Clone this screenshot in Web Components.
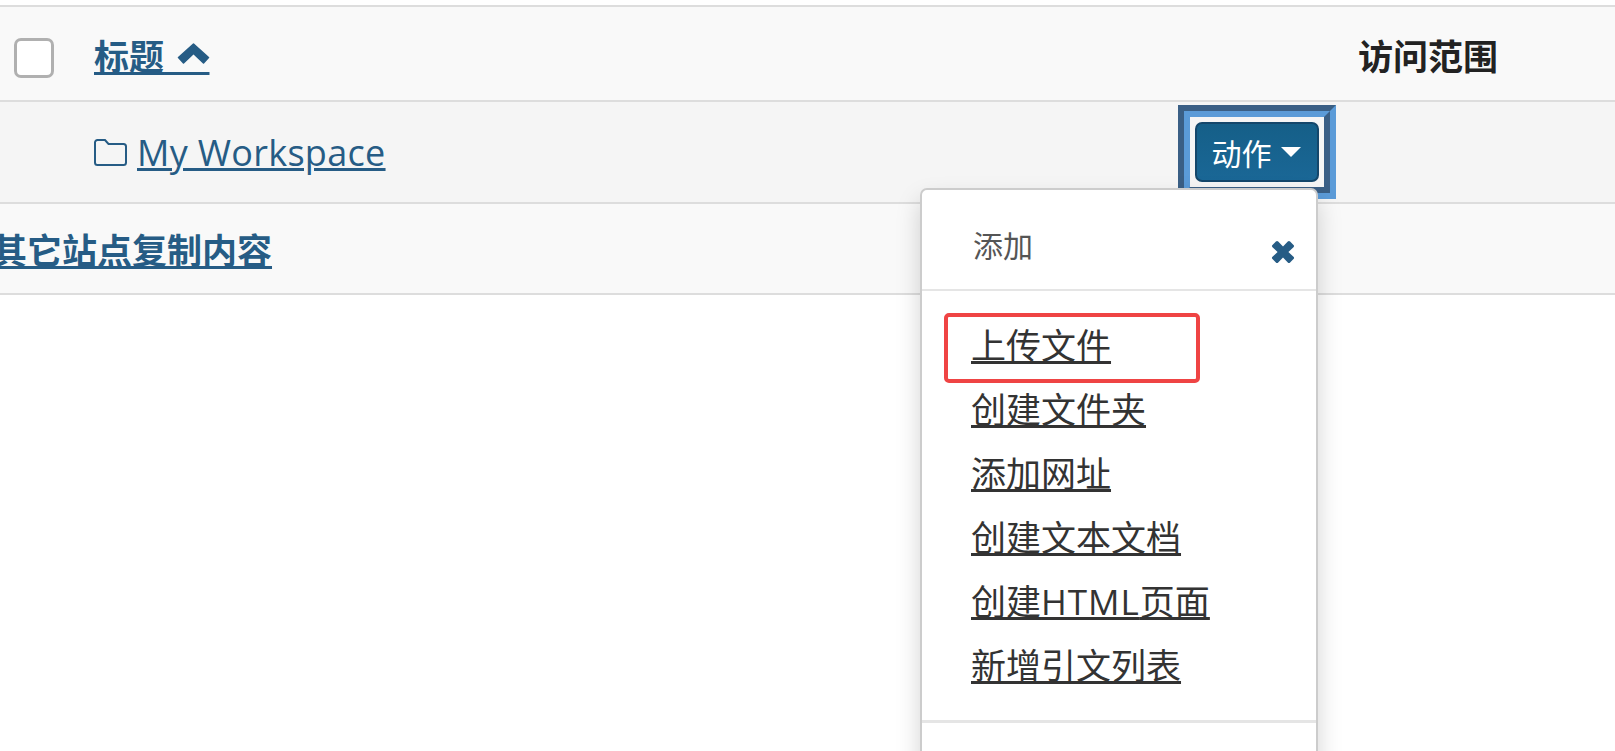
<!DOCTYPE html>
<html lang="zh">
<head>
<meta charset="utf-8">
<title>资源</title>
<style>
  html, body { margin: 0; height: 100%; overflow: hidden; background: #fff; }
  body { font-family: "Open Sans", "Noto Sans CJK SC", sans-serif; font-size: 35px; color: #333; padding-top: 5px; box-sizing: border-box; }
</style>
</head>
<body>
<site-table>
  <table-row slot="rows" kind="head" style="--h:93px">
    <check-box slot="check"></check-box>
    <sort-link slot="title">标题</sort-link>
    <span slot="access">访问范围</span>
  </table-row>
  <table-row slot="rows" kind="folder" style="--h:100px">
    <folder-link slot="title">My Workspace</folder-link>
    <action-menu slot="action" label="动作" heading="添加">
      <menu-item>上传文件<mark-box slot="mark"></mark-box></menu-item>
      <menu-item>创建文件夹</menu-item>
      <menu-item>添加网址</menu-item>
      <menu-item>创建文本文档</menu-item>
      <menu-item>创建<span style="letter-spacing:1px">HTML</span>页面</menu-item>
      <menu-item>新增引文列表</menu-item>
    </action-menu>
  </table-row>
  <table-row slot="rows" kind="foot" style="--h:89px">
    <copy-link slot="wide">其它站点复制内容</copy-link>
  </table-row>
</site-table>

<script>
// Small helper, every element gets its own open shadow root
function shadow (el, html) {
  const root = el.attachShadow({ mode: 'open' });
  root.innerHTML = html;
  return root;
}

class SiteTable extends HTMLElement {
  constructor () {
    super();
    shadow(this, `
      <style>
        :host { display: flex; flex-direction: column; border-top: 2px solid #ddd; }
      </style>
      <slot name="rows"></slot>`);
  }
}
customElements.define('site-table', SiteTable);

class TableRow extends HTMLElement {
  constructor () {
    super();
    shadow(this, `
      <style>
        :host {
          display: grid;
          grid-template-columns: 94px 1084px 180px 1fr;
          align-items: center;
          height: var(--h);
          background: #f9f9f9;
          border-bottom: 2px solid #ddd;
        }
        :host([kind="head"]) { height: calc(var(--h) - 8px); padding-top: 8px; }
        :host([kind="head"]) .title, :host([kind="head"]) .access { margin-bottom: 6px; }
        :host([kind="folder"]) { background: #f5f5f5; }
        .check { padding-left: 14px; display: flex; }
        .access { font-weight: 700; color: #222; }
        .wide { display: none; }
        :host([kind="foot"]) .wide { display: block; grid-column: 1 / -1; margin-left: -8px; }
        :host([kind="foot"]) .check, :host([kind="foot"]) .title,
        :host([kind="foot"]) .action, :host([kind="foot"]) .access { display: none; }
      </style>
      <div class="check"><slot name="check"></slot></div>
      <div class="title"><slot name="title"></slot></div>
      <div class="action"><slot name="action"></slot></div>
      <div class="access"><slot name="access"></slot></div>
      <div class="wide"><slot name="wide"></slot></div>`);
  }
}
customElements.define('table-row', TableRow);

class CheckBox extends HTMLElement {
  constructor () {
    super();
    shadow(this, `
      <style>
        :host { display: block; width: 40px; height: 40px; box-sizing: border-box;
                background: #fff; border: 3px solid #b0b0b0; border-radius: 7px; }
      </style>`);
  }
}
customElements.define('check-box', CheckBox);

class SortLink extends HTMLElement {
  constructor () {
    super();
    shadow(this, `
      <style>
        :host { display: inline-block; }
        a { color: #265c85; font-weight: 700; text-decoration: underline; white-space: pre; }
        /* blanks carry the underline, the chevron lies over them */
        .chev { position: relative; }
        svg { position: absolute; left: 13px; top: 10px; width: 33px; height: 22px; }
      </style>
      <a href="#"><slot></slot><span class="chev">&nbsp;&nbsp;&nbsp;&nbsp;&nbsp;<svg viewBox="0 0 33 22"><path fill="#265c85" stroke="#265c85" stroke-width="1.500" stroke-linejoin="round" d="M16.500 1 31.500 14.500 26.500 20 16.500 10.500 6.500 20 1.500 14.500z"/></svg></span></a>`);
  }
}
customElements.define('sort-link', SortLink);

class FolderLink extends HTMLElement {
  constructor () {
    super();
    shadow(this, `
      <style>
        :host { display: flex; align-items: center; gap: 10px; }
        svg { width: 33px; height: 29px; flex: none; }
        a { color: #265c85; text-decoration: underline; font-size: 36px; letter-spacing: .3px; }
      </style>
      <svg viewBox="0 0 33 29" fill="none" stroke="#265c85" stroke-width="2"><path d="M1 4.5A2.5 2.5 0 0 1 3.5 2h7.5l3.5 4h15A2.5 2.5 0 0 1 32 8.5v16a2.5 2.5 0 0 1-2.5 2.500h-26A2.500 2.500 0 0 1 1 24.500z"/></svg>
      <a href="#"><slot></slot></a>`);
  }
}
customElements.define('folder-link', FolderLink);

class CopyLink extends HTMLElement {
  constructor () {
    super();
    shadow(this, `
      <style>
        :host { display: block; }
        a { color: #265c85; font-weight: 700; text-decoration: underline; }
      </style>
      <a href="#"><slot></slot></a>`);
  }
}
customElements.define('copy-link', CopyLink);

class ActionMenu extends HTMLElement {
  constructor () {
    super();
    const root = shadow(this, `
      <style>
        :host { display: block; position: relative; width: 158px; height: 94px; }
        /* the focus ring, two nested bevels */
        .ring-a { box-sizing: border-box; height: 100%; border: 6px solid; border-color: #3a5f85 #5b9bd8 #5b9bd8 #3a5f85; }
        .ring-b { box-sizing: border-box; height: 100%; border: 6px solid; border-color: #5b9bd8 #3a5f85 #3a5f85 #5b9bd8;
                  padding: 5px; display: flex; }
        button { flex: 1; margin: 0; padding: 0 2px 0 0; font: inherit; font-size: 30px; color: #fff;
                 background: linear-gradient(#155f88, #1a6796); border: 2px solid #14476b; border-radius: 7px;
                 display: flex; align-items: center; justify-content: center; gap: 9px; }
        .caret { width: 0; height: 0; border: 10px solid transparent; border-top-color: #fff; border-bottom: 0; }
        .menu { position: absolute; left: -258px; top: 83px; width: 398px; box-sizing: border-box;
                background: #fff; border: 2px solid #ccc; border-radius: 7px;
                box-shadow: 0 12px 24px rgba(0,0,0,.175); }
        .head { height: 101px; box-sizing: border-box; display: flex; justify-content: space-between;
                padding: 36px 21px 0 51px; border-bottom: 2px solid #e5e5e5; font-size: 30px; color: #555; line-height: 40px; }
        .head svg { width: 24px; height: 24px; margin-top: 14px; }
        .list { display: flex; flex-direction: column; padding: 23px 0 22px; border-bottom: 3px solid #e5e5e5; }
        .rest { height: 60px; }
      </style>
      <div class="ring-a"><div class="ring-b">
        <button type="button"><span id="lbl"></span><span class="caret"></span></button>
      </div></div>
      <div class="menu">
        <div class="head"><span id="hd"></span>
          <svg viewBox="0 0 24 24"><path fill="#265c85" d="M12 6.600 16.800 1.500a1.600 1.600 0 0 1 2.300 0l3.400 3.400a1.600 1.600 0 0 1 0 2.300L17.400 12l5.100 4.800a1.600 1.600 0 0 1 0 2.300l-3.400 3.400a1.600 1.600 0 0 1-2.300 0L12 17.400l-4.800 5.100a1.600 1.600 0 0 1-2.300 0l-3.400-3.400a1.600 1.600 0 0 1 0-2.300L6.600 12 1.500 7.200a1.600 1.600 0 0 1 0-2.300l3.400-3.400a1.600 1.600 0 0 1 2.300 0z"/></svg>
        </div>
        <div class="list"><slot></slot></div>
        <div class="rest"></div>
      </div>`);
    root.getElementById('lbl').textContent = this.getAttribute('label');
    root.getElementById('hd').textContent = this.getAttribute('heading');
  }
}
customElements.define('action-menu', ActionMenu);

class MenuItem extends HTMLElement {
  constructor () {
    super();
    shadow(this, `
      <style>
        :host { display: block; position: relative; height: 64px; line-height: 64px; padding-left: 49px; }
        a { color: #333; text-decoration: underline; }
      </style>
      <a href="#"><slot></slot></a><slot name="mark"></slot>`);
  }
}
customElements.define('menu-item', MenuItem);

// Red annotation box laid over the first item
class MarkBox extends HTMLElement {
  constructor () {
    super();
    shadow(this, `
      <style>
        :host { position: absolute; left: 22px; top: -1px; width: 256px; height: 70px; box-sizing: border-box;
                border: 4px solid #ef4444; border-radius: 5px; }
      </style>`);
  }
}
customElements.define('mark-box', MarkBox);
</script>
</body>
</html>
